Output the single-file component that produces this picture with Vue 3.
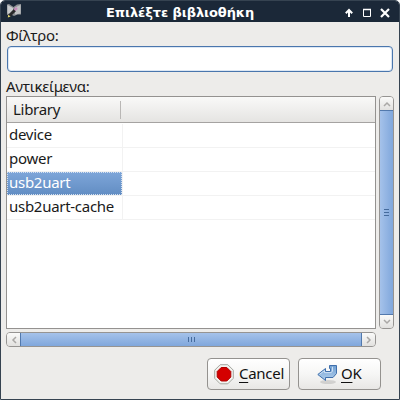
<script setup>
import { ref } from 'vue'

const filter = ref('')
const items = ['device', 'power', 'usb2uart', 'usb2uart-cache']
const selected = ref('usb2uart')
</script>

<template>
  <div class="window">
    <header class="titlebar">
      <svg class="app-icon" width="16" height="16" viewBox="0 0 16 16">
        <path d="M1 1.5L3 1L7.5 4L11 1.5L15 1V11.5L11.5 11.5L8 13L4 11L1 12Z" fill="#8f9296" />
        <path d="M1.5 2L7 5V11L1.5 10.5Z" fill="#c9cbcd" />
        <path d="M9 4.5L14.5 2V10.5L9 11.5Z" fill="#c0c1c4" />
        <path d="M3.5 12.5L9 7" stroke="#29292b" stroke-width="3" />
        <path d="M8.5 7L11 5" stroke="#c78abb" stroke-width="2.4" />
        <path d="M1.8 14.5L2.2 11.8L4.6 13.4Z" fill="#e6da72" />
      </svg>
      <h1 class="title">Επιλέξτε βιβλιοθήκη</h1>
      <svg class="controls" width="48" height="12" viewBox="0 0 48 12">
        <path d="M5 10V3M1.8 6.2L5 3L8.2 6.2" fill="none" stroke="#fff" stroke-width="2" />
        <path d="M19.5 2.5H26.5V9.5H19.5Z" fill="none" stroke="#fff" stroke-width="1" />
        <path d="M19 2.5H27" stroke="#fff" stroke-width="1.6" />
        <path d="M37 2L45 10M45 2L37 10" stroke="#fff" stroke-width="2.2" />
      </svg>
    </header>

    <main class="body">
      <label class="label" for="filter">Φίλτρο:</label>
      <input id="filter" v-model="filter" class="entry" type="text" />
      <div class="label second">Αντικείμενα:</div>

      <section class="scroller">
        <div class="list">
          <div class="head"><span class="head-cell">Library</span></div>
          <div v-for="item in items" :key="item" class="row" @click="selected = item">
            <div class="cell" :class="{ selected: selected === item }">{{ item }}</div>
            <div class="rest"></div>
          </div>
        </div>

        <div class="bar vertical">
          <div class="step"><svg width="8" height="6" viewBox="0 0 8 6"><path d="M1 5L4 2L7 5" /></svg></div>
          <div class="thumb"><i></i><i></i><i></i></div>
          <div class="step"><svg width="8" height="6" viewBox="0 0 8 6"><path d="M1 1L4 4L7 1" /></svg></div>
        </div>

        <div class="bar horizontal">
          <div class="step"><svg width="6" height="8" viewBox="0 0 6 8"><path d="M5 1L2 4L5 7" /></svg></div>
          <div class="thumb"><i></i><i></i><i></i></div>
          <div class="step"><svg width="6" height="8" viewBox="0 0 6 8"><path d="M1 1L4 4L1 7" /></svg></div>
        </div>
      </section>

      <footer class="actions">
        <button class="button">
          <svg width="20" height="21" viewBox="0 0 20 21">
            <path d="M6.2 .7H13.8L19.3 6.2V14.3L13.8 19.8H6.2L.7 14.3V6.2Z" fill="#f3f3f0" stroke="#a3a69f" />
            <path d="M7.2 3.5H12.8L16.8 7.5V13L12.8 17H7.2L3.2 13V7.5Z" fill="#d40000" stroke="#b00000" />
          </svg>
          <span class="text"><u>C</u>ancel</span>
        </button>
        <button class="button ok">
          <svg width="22" height="21" viewBox="0 0 22 21">
            <defs>
              <linearGradient id="arrow" x1="0" y1="0" x2="0" y2="1">
                <stop offset="0" stop-color="#6f9fd2" />
                <stop offset="1" stop-color="#b3cfec" />
              </linearGradient>
            </defs>
            <ellipse cx="11" cy="18" rx="8" ry="2" fill="#000" opacity=".12" />
            <path d="M12.5 1.5H19.5V9.5L16 13.5H8.5V16.5L.8 10.5L8.5 4.5V7.5H13.5V4.5H12.5Z" fill="url(#arrow)" stroke="#3f6fac" stroke-linejoin="round" />
            <path d="M2.6 10.3L7.5 6.6V8.6H14.3L15.5 7V2.8" fill="none" stroke="#cfe1f4" />
          </svg>
          <span class="text"><u>O</u>K</span>
        </button>
      </footer>
    </main>
  </div>
</template>

<style>
body {
  background: #fff;
}
</style>

<style scoped>
* {
  box-sizing: border-box;
}
.window {
  width: 400px;
  height: 400px;
  display: flex;
  flex-direction: column;
  border: 1px solid #364351;
  border-radius: 5px 5px 0 0;
  background: #edecea;
  color: #1a1a1a;
  font: 15px/20px "Noto Sans", sans-serif;
  letter-spacing: -0.28px;
  overflow: hidden;
}
.titlebar {
  height: 21px;
  flex: none;
  display: flex;
  align-items: center;
  padding: 0 7px 0 5px;
  background: #1b2838;
}
.app-icon {
  flex: none;
  margin-top: -1px;
}
.controls {
  flex: none;
  margin: 2px 0 0 auto;
}
.title {
  margin: 2px 0 0 84px;
  color: #fff;
  font: bold 13px/18px "DejaVu Sans", sans-serif;
  letter-spacing: -0.1px;
  white-space: nowrap;
}
.body {
  display: flex;
  flex-direction: column;
  padding: 3px 5px 0;
}
.label {
  height: 21px;
}
.second {
  margin-top: 4px;
}
.entry {
  width: 386px;
  height: 26px;
  margin-left: 1px;
  padding: 2px 5px;
  border: 1px solid #4a76ad;
  border-radius: 4px;
  outline: none;
  background: #fff;
  box-shadow: inset 0 0 0 1px #dce7f4;
  font: inherit;
}
.scroller {
  display: grid;
  grid-template: 233px 15px / 370px 15px;
  gap: 3px;
  margin-top: -1px;
}
.list {
  border: 1px solid #949290;
  background: #fff;
}
.head {
  height: 26px;
  margin-bottom: 1px;
  padding: 4px 0 3px;
  border-bottom: 1px solid #a5a3a1;
  background: linear-gradient(#f9f9f8, #e5e4e2);
}
.head-cell {
  display: block;
  width: 114px;
  height: 18px;
  padding-left: 6px;
  border-right: 1px solid #b9b7b5;
  line-height: 16px;
}
.row {
  height: 24px;
  display: flex;
  border-bottom: 1px solid #f2f2f2;
}
.cell {
  width: 115px;
  height: 23px;
  padding-left: 2px;
  line-height: 21px;
  white-space: nowrap;
}
.cell.selected {
  background: linear-gradient(#7ea6d9, #628dc3);
  outline: 1px dotted #d5e1f0;
  outline-offset: -1px;
  color: #fff;
}
.rest {
  flex: 1;
  border-left: 1px solid #f2f2f2;
}
.bar {
  display: flex;
  border: 1px solid #969492;
  border-radius: 4px;
  overflow: hidden;
}
.vertical {
  flex-direction: column;
}
.step {
  flex: 0 0 13px;
  display: flex;
  align-items: center;
  justify-content: center;
  background: linear-gradient(#fafaf9, #e2e1df);
}
.step path {
  fill: none;
  stroke: #aaa8a6;
  stroke-width: 1.5;
}
.thumb {
  flex: 1;
  display: flex;
  align-items: center;
  justify-content: center;
  gap: 2px;
}
.vertical .thumb {
  flex-direction: column;
  margin: 0 -1px;
  border: 1px solid #5279ad;
  background: linear-gradient(90deg, #a5c2ea, #80a7dc);
}
.horizontal .thumb {
  margin: -1px 0;
  border: 1px solid #5279ad;
  background: linear-gradient(#a5c2ea, #80a7dc);
}
.thumb i {
  width: 1px;
  height: 5px;
  background: #456b9d;
}
.vertical .thumb i {
  width: 5px;
  height: 1px;
}
.actions {
  display: flex;
  justify-content: flex-end;
  gap: 8px;
  margin: 11px 13px 0 0;
}
.button {
  width: 83px;
  height: 32px;
  display: flex;
  align-items: center;
  gap: 5px;
  padding: 0 0 0 6px;
  border: 1px solid #94928f;
  border-radius: 4px;
  background: linear-gradient(#fff, #f6f6f5 50%, #e8e7e5);
  color: #111;
  font: inherit;
  letter-spacing: inherit;
}
.ok {
  padding-left: 18px;
  gap: 2px;
}
.button svg {
  flex: none;
}
.text {
  padding-bottom: 2px;
}
u {
  text-decoration-thickness: 1px;
  text-underline-offset: 3px;
}
</style>
